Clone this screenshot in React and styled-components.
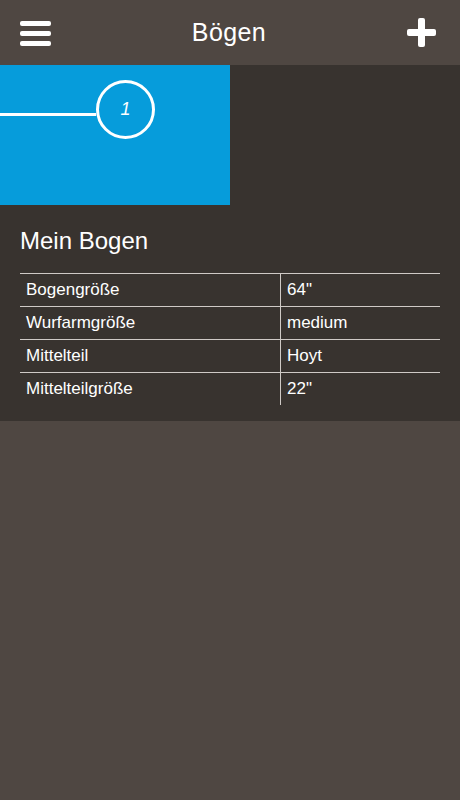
import styled, { createGlobalStyle } from "styled-components";

const GlobalStyle = createGlobalStyle`
  html, body {
    margin: 0;
    padding: 0;
    background: #4f4742;
    font-family: "Liberation Sans", Arial, sans-serif;
  }
`;

const Page = styled.div`
  width: 460px;
  min-height: 800px;
  background: #4f4742;
  color: #fff;
`;

const Header = styled.header`
  height: 65px;
  display: flex;
  align-items: center;
  justify-content: space-between;
  padding: 0 24px 0 20px;
  box-sizing: border-box;
`;

const Title = styled.h1`
  margin: 0;
  font-size: 25px;
  font-weight: 400;
  letter-spacing: 0.4px;
`;

const IconButton = styled.button`
  background: none;
  border: 0;
  padding: 0;
  display: flex;
  cursor: pointer;
`;

const Content = styled.section`
  background: #38332f;
  padding-bottom: 16px;
`;

const Tile = styled.div`
  width: 230px;
  height: 140px;
  background: #069cdb;
  display: flex;
  align-items: flex-start;
  padding-top: 15px;
  box-sizing: border-box;
`;

const Line = styled.div`
  width: 96px;
  height: 3px;
  background: #fff;
  margin-top: 33px;
`;

const Circle = styled.div`
  width: 59px;
  height: 59px;
  border: 3px solid #fff;
  border-radius: 50%;
  box-sizing: border-box;
  display: flex;
  align-items: center;
  justify-content: center;
  font-style: italic;
  font-size: 18px;
`;

const BowName = styled.h2`
  margin: 0;
  padding: 22px 20px 18px;
  font-size: 24px;
  font-weight: 400;
`;

const Table = styled.table`
  margin: 0 20px;
  width: 420px;
  border-collapse: collapse;
  font-size: 17px;
`;

const Row = styled.tr`
  border-top: 1px solid #cfcac6;
`;

const Cell = styled.td`
  height: 32px;
  padding: 0 6px;
  width: ${(p) => p.w || "auto"};
  border-left: ${(p) => (p.divided ? "1px solid #cfcac6" : "none")};
`;

const rows = [
  ["Bogengröße", "64\""],
  ["Wurfarmgröße", "medium"],
  ["Mittelteil", "Hoyt"],
  ["Mittelteilgröße", "22\""],
];

export default function App() {
  return (
    <Page>
      <GlobalStyle />
      <Header>
        <IconButton>
          <svg width="31" height="26" viewBox="0 0 31 26">
            <rect x="0" y="1" width="31" height="5" rx="2" fill="#fff" />
            <rect x="0" y="11" width="31" height="5" rx="2" fill="#fff" />
            <rect x="0" y="21" width="31" height="5" rx="2" fill="#fff" />
          </svg>
        </IconButton>
        <Title>Bögen</Title>
        <IconButton>
          <svg width="29" height="29" viewBox="0 0 29 29">
            <rect x="11" y="0" width="7" height="29" rx="2" fill="#fff" />
            <rect x="0" y="11" width="29" height="7" rx="2" fill="#fff" />
          </svg>
        </IconButton>
      </Header>
      <Content>
        <Tile>
          <Line />
          <Circle>1</Circle>
        </Tile>
        <BowName>Mein Bogen</BowName>
        <Table>
          <tbody>
            {rows.map(([k, v]) => (
              <Row key={k}>
                <Cell w="248px">{k}</Cell>
                <Cell divided>{v}</Cell>
              </Row>
            ))}
          </tbody>
        </Table>
      </Content>
    </Page>
  );
}
